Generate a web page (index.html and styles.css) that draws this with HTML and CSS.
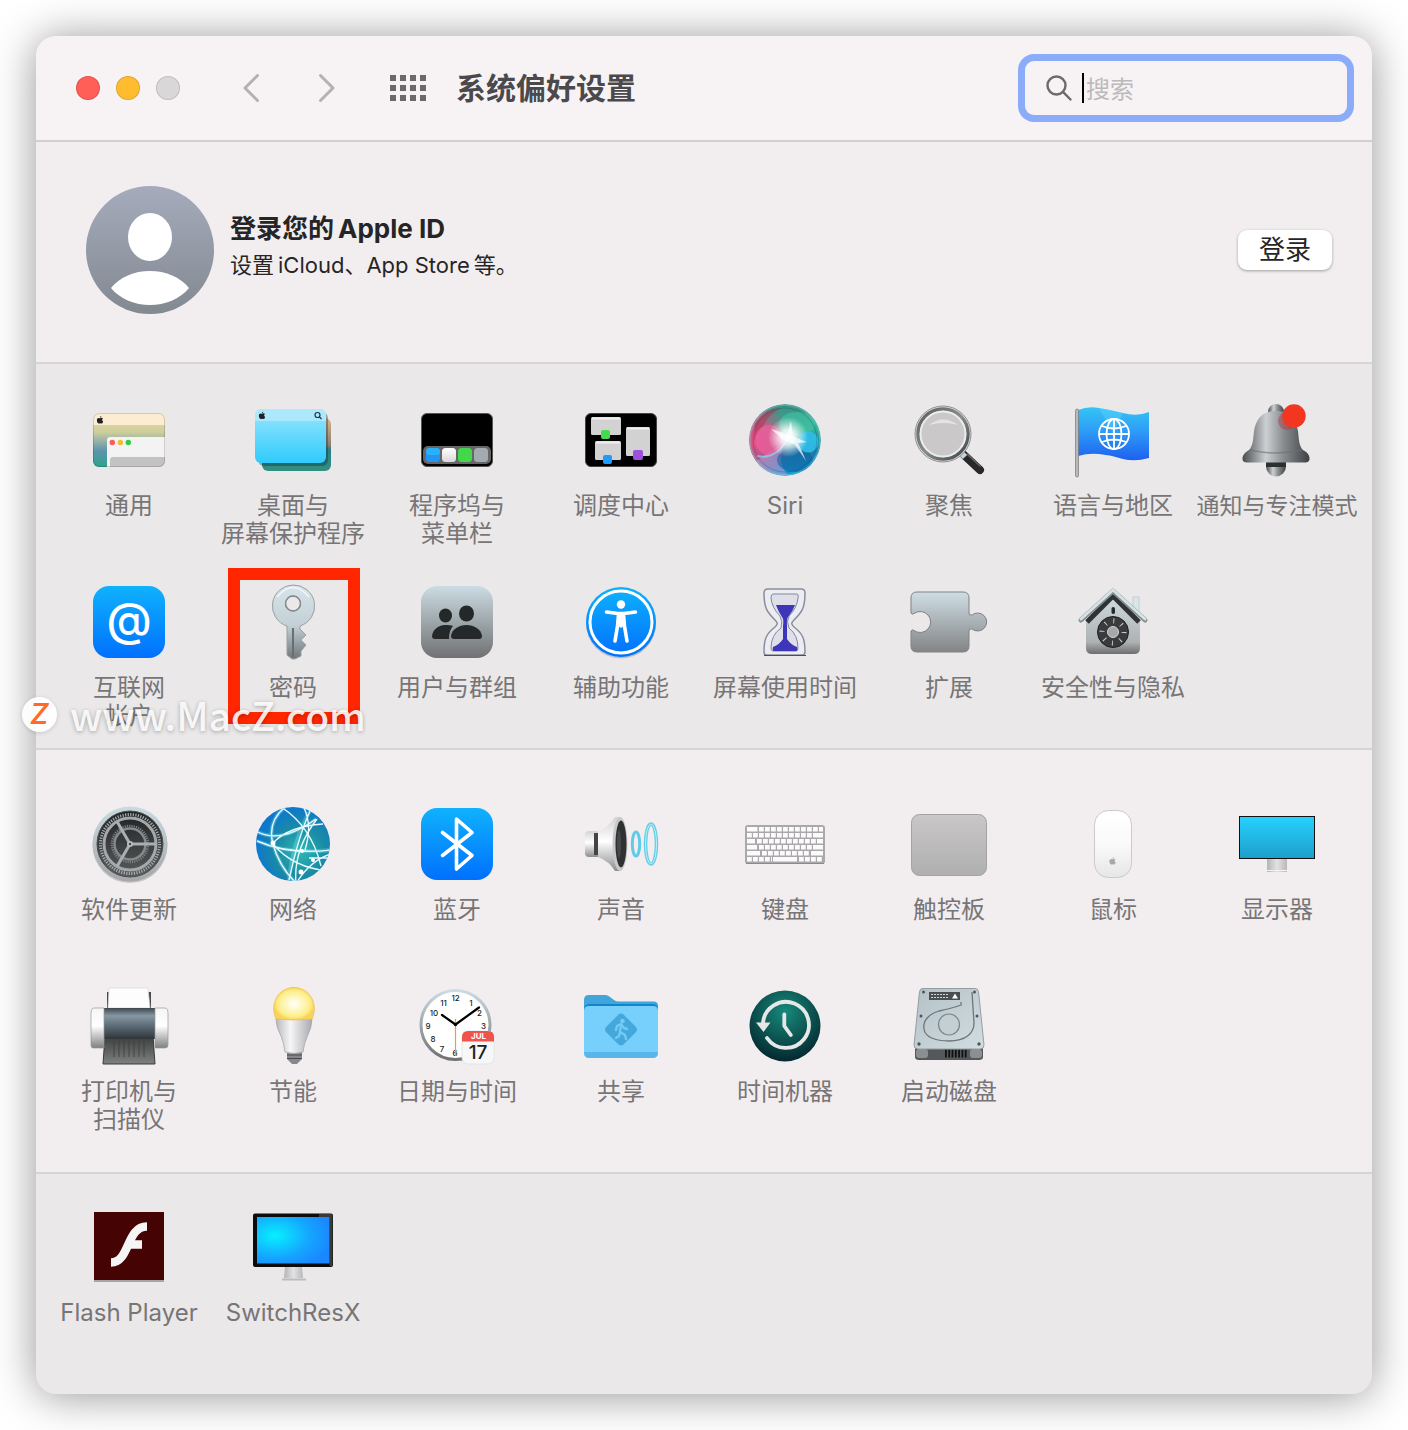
FILE: index.html
```html
<!DOCTYPE html>
<html lang="zh-CN">
<head>
<meta charset="utf-8">
<title>系统偏好设置</title>
<link rel="stylesheet" href="styles.css">
</head>
<body>
<svg class="defs" width="0" height="0" aria-hidden="true">
  <defs>
    <symbol id="apple" viewBox="0 0 16 18"><path d="M11 0c.2 1.500-1.400 3.700-3 3.700C7.800 2 9.400.3 11 0zM8 5c.8 0 2-1 3.700-.9 1 .1 2.300.5 3 1.700-2.700 1.700-2.200 5.300.6 6.400C14.600 14.200 13 17 11.300 17c-1.200 0-1.700-.7-3.100-.7-1.500 0-2 .7-3.100.7C3.200 17 .8 13 .8 9.600.8 6 3 4.200 5 4.200 6.300 4.200 7.200 5 8 5z"/></symbol>
    <linearGradient id="blue" x1="0" y1="0" x2="0" y2="1"><stop offset="0" stop-color="#0fb2fd"/><stop offset="1" stop-color="#0070fe"/></linearGradient>
    <linearGradient id="steel" x1="0" y1="0" x2="0" y2="1"><stop offset="0" stop-color="#cbdce3"/><stop offset="1" stop-color="#707172"/></linearGradient>
    <linearGradient id="puzzle" x1="0" y1="0" x2="0" y2="1"><stop offset="0" stop-color="#cfdee4"/><stop offset="1" stop-color="#838485"/></linearGradient>
    <linearGradient id="dune" x1="0" y1="0" x2="0" y2="1"><stop offset="0" stop-color="#e9dca8"/><stop offset=".35" stop-color="#cfce9c"/><stop offset=".7" stop-color="#5d94ae"/><stop offset="1" stop-color="#2da389"/></linearGradient>
    <linearGradient id="white" x1="0" y1="0" x2="0" y2="1"><stop offset="0" stop-color="#ffffff"/><stop offset="1" stop-color="#d8d8da"/></linearGradient>
    <linearGradient id="sky" x1="0" y1="0" x2="0" y2="1"><stop offset="0" stop-color="#9be6fd"/><stop offset="1" stop-color="#2ecbfd"/></linearGradient>
    <linearGradient id="back" x1="0" y1="0" x2="0" y2="1"><stop offset="0" stop-color="#d9b48c"/><stop offset=".5" stop-color="#8a8173"/><stop offset=".6" stop-color="#2b7f84"/><stop offset="1" stop-color="#329080"/></linearGradient>
    <linearGradient id="metalx"><stop offset="0" stop-color="#4a4d50"/><stop offset=".35" stop-color="#ccd0d2"/><stop offset=".6" stop-color="#8b8f92"/><stop offset="1" stop-color="#3f4144"/></linearGradient>
    <linearGradient id="lensrim" x1="0" y1="0" x2="1" y2="1"><stop offset="0" stop-color="#5a5c5d"/><stop offset=".5" stop-color="#8b8c8c"/><stop offset="1" stop-color="#3e4041"/></linearGradient>
    <linearGradient id="flag" x1="0" y1="0" x2="0" y2="1"><stop offset="0" stop-color="#33c5f3"/><stop offset=".45" stop-color="#2e9cf8"/><stop offset="1" stop-color="#1e5ff0"/></linearGradient>
    <linearGradient id="keyg" x1="0" y1="0" x2="0" y2="1"><stop offset="0" stop-color="#d7e4e9"/><stop offset=".55" stop-color="#c3d0d6"/><stop offset="1" stop-color="#6f7578"/></linearGradient>
    <linearGradient id="wall" x1="0" y1="0" x2="0" y2="1"><stop offset="0" stop-color="#cfdde1"/><stop offset=".8" stop-color="#aeb2b3"/><stop offset="1" stop-color="#6c6d6e"/></linearGradient>
    <linearGradient id="rim" x1="0" y1="0" x2="0" y2="1"><stop offset="0" stop-color="#c9dbe1"/><stop offset="1" stop-color="#a5a6a7"/></linearGradient>
    <linearGradient id="gearbg" x1="0" y1="0" x2="0" y2="1"><stop offset="0" stop-color="#1f2122"/><stop offset="1" stop-color="#5a5b5c"/></linearGradient>
    <radialGradient id="net" cx=".6" cy=".6" r=".65"><stop offset="0" stop-color="#2fb8b4"/><stop offset=".5" stop-color="#1b8ba5"/><stop offset="1" stop-color="#0b74d4"/></radialGradient>
    <linearGradient id="cone" x1="0" y1="0" x2="0" y2="1"><stop offset="0" stop-color="#d3d3d4"/><stop offset=".45" stop-color="#ffffff"/><stop offset="1" stop-color="#8c8d8e"/></linearGradient>
    <linearGradient id="pad" x1="0" y1="0" x2="0" y2="1"><stop offset="0" stop-color="#c9c7c8"/><stop offset="1" stop-color="#b0afb0"/></linearGradient>
    <linearGradient id="mouse" x1="0" y1="0" x2="0" y2="1"><stop offset="0" stop-color="#ffffff"/><stop offset=".5" stop-color="#fafafa"/><stop offset="1" stop-color="#e6e6e8"/></linearGradient>
    <linearGradient id="screen" x1="0" y1="0" x2="0" y2="1"><stop offset="0" stop-color="#26d1ff"/><stop offset="1" stop-color="#1d9fc9"/></linearGradient>
    <linearGradient id="roller" x1="0" y1="0" x2="0" y2="1"><stop offset="0" stop-color="#3f474d"/><stop offset=".25" stop-color="#8698a4"/><stop offset=".55" stop-color="#5f6f7a"/><stop offset="1" stop-color="#2f3538"/></linearGradient>
    <linearGradient id="cap" x1="0" y1="0" x2="0" y2="1"><stop offset="0" stop-color="#f5f5f5"/><stop offset=".45" stop-color="#ffffff"/><stop offset="1" stop-color="#7e7f80"/></linearGradient>
    <linearGradient id="tray" x1="0" y1="0" x2="0" y2="1"><stop offset="0" stop-color="#3c3d3d"/><stop offset="1" stop-color="#7f8080"/></linearGradient>
    <radialGradient id="glow"><stop offset="0" stop-color="#ffffff"/><stop offset=".3" stop-color="#fffad0"/><stop offset=".8" stop-color="#fdee8a"/><stop offset="1" stop-color="#f8d35c"/></radialGradient>
    <linearGradient id="bulb"><stop offset="0" stop-color="#b8b9bc"/><stop offset=".4" stop-color="#f6f6f8"/><stop offset="1" stop-color="#a9aaae"/></linearGradient>
    <radialGradient id="tm" cx=".5" cy=".3" r=".7"><stop offset="0" stop-color="#178a7c"/><stop offset="1" stop-color="#04282f"/></radialGradient>
    <linearGradient id="plate" x1="0" y1="0" x2="1" y2="1"><stop offset="0" stop-color="#b3c1c7"/><stop offset="1" stop-color="#d2dde1"/></linearGradient>
    <radialGradient id="srx" cx=".25" cy=".4" r=".8"><stop offset="0" stop-color="#07f0ff"/><stop offset=".6" stop-color="#15a5ff"/><stop offset="1" stop-color="#1a86ff"/></radialGradient>
    <linearGradient id="stand"><stop offset="0" stop-color="#b4b4b6"/><stop offset=".5" stop-color="#e2e2e4"/><stop offset="1" stop-color="#b8b8ba"/></linearGradient>
    <radialGradient id="star"><stop offset="0" stop-color="#fff"/><stop offset=".35" stop-color="#fff" stop-opacity=".85"/><stop offset="1" stop-color="#fff" stop-opacity="0"/></radialGradient>
    <linearGradient id="avatar" x1="0" y1="0" x2="0" y2="1"><stop offset="0" stop-color="#a5abbb"/><stop offset="1" stop-color="#828991"/></linearGradient>
    <radialGradient id="siriA" cx="0" cy=".5" r=".6"><stop offset="0" stop-color="#f04a84"/><stop offset=".5" stop-color="#d8507f" stop-opacity=".8"/><stop offset="1" stop-color="#c8416f" stop-opacity="0"/></radialGradient>
    <linearGradient id="siriB" x1="0" y1="0" x2="0" y2="1"><stop offset="0" stop-color="#3d8d80"/><stop offset=".35" stop-color="#2fb298"/><stop offset=".65" stop-color="#1f7fa8"/><stop offset="1" stop-color="#169bd8"/></linearGradient>
    <clipPath id="clipNet"><circle cx="40" cy="40" r="37"/></clipPath>
    <clipPath id="clipGeneral"><rect x="4" y="13" width="72" height="54" rx="6"/></clipPath>
    <clipPath id="clipDesk"><rect x="2" y="9" width="71" height="54" rx="6"/></clipPath>
    <clipPath id="clipSiri"><circle cx="40" cy="40" r="36"/></clipPath>
  </defs>
</svg>

<div class="desktop">
<main class="window">
  <header class="toolbar">
    <div class="lights">
      <button class="light light-close" type="button" aria-label="关闭"></button>
      <button class="light light-min" type="button" aria-label="最小化"></button>
      <button class="light light-zoom" type="button" aria-label="缩放" disabled></button>
    </div>
    <nav class="history">
      <button class="tool" type="button" aria-label="后退"><svg width="18" height="30" viewBox="0 0 18 30"><path d="M15.500 2.500 3 15l12.500 12.500" fill="none" stroke="#b4b1b3" stroke-width="3" stroke-linecap="round" stroke-linejoin="round"/></svg></button>
      <button class="tool" type="button" aria-label="前进"><svg width="18" height="30" viewBox="0 0 18 30"><path d="M2.500 2.500 15 15 2.500 27.500" fill="none" stroke="#b4b1b3" stroke-width="3" stroke-linecap="round" stroke-linejoin="round"/></svg></button>
    </nav>
    <button class="tool" type="button" aria-label="显示全部"><svg width="36" height="26" viewBox="0 0 36 26"><path d="M0 3h36M0 13h36M0 23h36" stroke="#6b696b" stroke-width="6" stroke-dasharray="6 4"/></svg></button>
    <h1 class="title">系统偏好设置</h1>
    <label class="search">
      <svg width="26" height="26" viewBox="0 0 26 26" fill="none" stroke="#6b696b" stroke-width="2.400" stroke-linecap="round" aria-hidden="true"><circle cx="10.500" cy="10.500" r="9"/><path d="m17.200 17.200 7.300 7.300"/></svg>
      <span class="caret"></span>
      <input class="search-input" type="text" placeholder="搜索" aria-label="搜索">
    </label>
  </header>

  <section class="account">
    <svg width="128" height="128" viewBox="0 0 128 128" aria-hidden="true"><circle cx="64" cy="64" r="64" fill="url(#avatar)"/><ellipse cx="64" cy="51" rx="22" ry="24" fill="#fff"/><path d="M25 102c9-11 23-17 39-17s30 6 39 17c-9 11-24 17-39 17s-30-6-39-17z" fill="#fff"/></svg>
    <div class="account-text">
      <h2 class="account-title">登录您的<span class="latin">Apple ID</span></h2>
      <p class="account-note">设置<span class="latin">iCloud</span>、<span class="mid">App Store</span>等。</p>
    </div>
    <button class="signin" type="button">登录</button>
  </section>

  <section class="panes panes-personal">
    <a class="pane" href="#general"><svg class="icon" viewBox="0 0 80 80"><g clip-path="url(#clipGeneral)"><rect x="4" y="13" width="72" height="54" fill="url(#dune)"/><rect x="4" y="13" width="72" height="12" fill="#fbecd2"/><path d="M18 67V40q0-3 3-3h57v30z" fill="#f3f3f3"/><path d="M21 67v-7q0-3 3-3h54v10z" fill="#c3c3c3"/></g><circle cx="23.300" cy="42.500" r="2.700" fill="#fc5b57"/><circle cx="31.300" cy="42.500" r="2.700" fill="#fdb827"/><circle cx="39.300" cy="42.500" r="2.700" fill="#31cd41"/><use href="#apple" x="7.500" y="16" width="7" height="8" fill="#222"/><rect x="4.500" y="13.500" width="71" height="53" rx="6" fill="none" stroke="#000" stroke-opacity=".15"/></svg><span class="name">通用</span></a>
    <a class="pane" href="#desktop"><svg class="icon" viewBox="0 0 80 80"><rect x="9" y="18" width="69" height="53" rx="6" fill="url(#back)"/><rect x="5" y="12" width="70" height="54" rx="6" fill="#123" opacity=".35"/><g clip-path="url(#clipDesk)"><rect x="2" y="9" width="71" height="54" fill="url(#sky)"/><rect x="2" y="9" width="71" height="12" fill="#b3eafb" opacity=".8"/></g><use href="#apple" x="5.500" y="11.500" width="7" height="8" fill="#222"/><g fill="none" stroke="#234" stroke-width="1.200"><circle cx="64.500" cy="15" r="2.500"/><path d="m66.500 17 2 2"/></g></svg><span class="name">桌面与<br>屏幕保护程序</span></a>
    <a class="pane" href="#dock"><svg class="icon" viewBox="0 0 80 80"><rect x="4.500" y="13.500" width="71" height="53" rx="5.500" stroke="#555" fill="#000"/><rect x="6" y="46" width="68" height="18" rx="5" fill="#666"/><rect x="9" y="48" width="14" height="14" rx="3.500" fill="#2494f5"/><rect x="9" y="48" width="14" height="7" rx="3.500" fill="#29b2fb"/><rect x="25" y="48" width="14" height="14" rx="3.500" fill="url(#white)"/><rect x="41" y="48" width="14" height="14" rx="3.500" fill="#43d74b"/><rect x="57" y="48" width="14" height="14" rx="3.500" fill="#a3abb0"/></svg><span class="name">程序坞与<br>菜单栏</span></a>
    <a class="pane" href="#mission"><svg class="icon" viewBox="0 0 80 80"><rect x="4.500" y="13.500" width="71" height="53" rx="5.500" stroke="#444" fill="#000"/><g fill="#d2d2d2"><rect x="10" y="17" width="30" height="18" rx="1.500"/><rect x="14" y="41" width="26" height="19" rx="1.500"/><rect x="45" y="27" width="24" height="29" rx="1.500"/></g><path d="M11 18.500h28M15 42.500h24M46 28.500h22" stroke="#efefef" stroke-width="2"/><rect x="20" y="30" width="9" height="9" rx="2" fill="#43dc4e"/><rect x="22" y="55" width="9" height="9" rx="2" fill="#1f9bfa"/><rect x="52" y="50" width="10" height="10" rx="2" fill="#9b51dc"/></svg><span class="name">调度中心</span></a>
    <a class="pane" href="#siri"><svg class="icon" viewBox="0 0 80 80"><g clip-path="url(#clipSiri)"><circle cx="40" cy="40" r="36" fill="url(#siriB)"/><circle cx="40" cy="40" r="36" fill="url(#siriA)"/><path d="M10 24Q20 8 36 8 24 14 18 26 12 32 9 42z" fill="#a8324f" opacity=".5"/><path d="M10 62Q24 52 40 42 30 62 44 76 22 76 10 62z" fill="#b39bd6" opacity=".6"/><ellipse cx="24" cy="40" rx="14" ry="15" fill="#ee5f9e" opacity=".75"/><ellipse cx="52" cy="24" rx="18" ry="12" fill="#49c9a8" opacity=".5"/><ellipse cx="50" cy="60" rx="18" ry="12" fill="#0f5c9e" opacity=".55"/><circle cx="63" cy="42" r="10.500" fill="#2fc0ef" opacity=".85"/><path d="M12 56q18 4 30-16" fill="none" stroke="#8fd6ee" stroke-width="2" opacity=".7"/><circle cx="43" cy="37" r="20" fill="url(#star)"/><path d="M26 29q14 4 16 6l4-14 2 15q10 5 14 6-7 1-9 1 4 8 8 18-8-12-12-17-10-3-12-5-5-5-11-10z" fill="#fff" opacity=".7"/></g><circle cx="40" cy="40" r="32" fill="none" stroke="#145" stroke-opacity=".25"/><circle cx="40" cy="40" r="35" fill="none" stroke="#7fd8dc" stroke-opacity=".4" stroke-width="1.500"/></svg><span class="name">Siri</span></a>
    <a class="pane" href="#spotlight"><svg class="icon" viewBox="0 0 80 80"><path d="m55 55 16 15" stroke="#262829" stroke-width="8" stroke-linecap="round"/><path d="m58 54 13 12" stroke="#666" stroke-width="1.500" stroke-linecap="round"/><path d="m51 52 5 5" stroke="#c6d3d8" stroke-width="6"/><circle cx="34" cy="34" r="28" fill="#dcdcdc" stroke="#8f9091" stroke-width="1"/><circle cx="34" cy="34" r="25" fill="#cac8c9" stroke="url(#lensrim)" stroke-width="3.500"/><circle cx="34" cy="34" r="22.500" fill="none" stroke="#e8eef0" stroke-width="2"/><path d="M20 25q14-11 29 0-14-4-29 0z" fill="#e4e4e4"/></svg><span class="name">聚焦</span></a>
    <a class="pane" href="#language"><svg class="icon" viewBox="0 0 80 80"><path d="M5 10q10-4 21-2 12 2 24 5 14 4 26-1v46q-14 4-26 1-12-4-24-5-11-1-21 2z" fill="url(#flag)"/><path d="M26 8q12 2 24 5l-10 20z" fill="#5fd8ff" opacity=".4"/><rect x="2.500" y="9" width="3" height="68" rx="1.500" fill="#b7b9ba" stroke="#77797b" stroke-width=".7"/><g fill="none" stroke="#fff" stroke-width="1.800"><circle cx="41" cy="34" r="15"/><ellipse cx="41" cy="34" rx="7.500" ry="15"/><path d="M26 34h30M41 19v30M29 26q12 5 24 0M29 42q12-5 24 0"/></g></svg><span class="name">语言与地区</span></a>
    <a class="pane" href="#notifications"><svg class="icon" viewBox="0 0 80 80"><circle cx="39" cy="66.500" r="10" fill="url(#metalx)"/><rect x="29" y="62" width="20" height="5" fill="#2c2e2f"/><circle cx="39" cy="12" r="8" fill="url(#metalx)"/><path d="M39 11c15 0 20 9 22 20 1 9 1 15 5 19 5 3 6.500 5 6.500 9 0 3-3 3.500-6 3.500h-55c-3 0-6-.5-6-3.500 0-4 2-6 6.500-9 4-4 4-10 5-19 2-11 7-20 22-20z" fill="url(#metalx)"/><path d="M13 50q26 6 52 0" fill="none" stroke="#6c6f72" stroke-width="1.500" opacity=".6"/><circle cx="50" cy="21" r="9" fill="#b4343a" opacity=".45"/><circle cx="57" cy="16" r="11.700" fill="#f2361f"/></svg><span class="name name-tight">通知与专注模式</span></a>
    <a class="pane" href="#internet"><svg class="icon" viewBox="0 0 80 80"><rect x="4" y="4" width="72" height="72" rx="16" fill="url(#blue)"/><text class="at" x="40" y="54" text-anchor="middle">@</text></svg><span class="name">互联网<br>帐户</span></a>
    <a class="pane pane-marked" href="#passwords"><svg class="icon" viewBox="0 0 80 80"><path fill-rule="evenodd" d="M40 3a21 21 0 0 1 7 41v3l6 6-5 5 5 5-5 6v5l-6 3h-3l-5-4V44A21 21 0 0 1 40 3zm0 11a7.500 7.500 0 1 0 0 15 7.500 7.500 0 0 0 0-15z" fill="url(#keyg)" stroke="#9aa0a3" stroke-width="1"/><circle cx="40" cy="21.500" r="7.500" fill="none" stroke="#85898b" stroke-width="1.500"/><path d="M40 46v29" stroke="#686e71" stroke-width="2"/><path d="M24 15Q40-4 56 15" fill="none" stroke="#fff" stroke-opacity=".7" stroke-width="1.500"/></svg><span class="name">密码</span></a>
    <a class="pane" href="#users"><svg class="icon" viewBox="0 0 80 80"><rect x="4" y="4" width="72" height="72" rx="16" fill="url(#steel)"/><g fill="#242828"><ellipse cx="28.500" cy="33.500" rx="6.500" ry="7"/><ellipse cx="49.500" cy="31.500" rx="7.500" ry="8"/><path d="M36 44q-4 4-4 13H18q-3 0-3-3c1-7 7-11 13-11 3 0 6 0 8 1z"/><path d="M37 57q-3 0-3-3c1-7 8-11 15.500-11S64 47 65 54q0 3-3 3z"/></g></svg><span class="name">用户与群组</span></a>
    <a class="pane" href="#accessibility"><svg class="icon" viewBox="0 0 80 80"><circle cx="40" cy="41.500" r="35" fill="#9aa3b0" opacity=".6"/><circle cx="40" cy="40" r="35" fill="url(#blue)"/><circle cx="40" cy="40" r="31" fill="none" stroke="#fff" stroke-width="3"/><circle cx="40" cy="22.500" r="4.200" fill="#fff"/><path d="M25.500 30 37 31.500h6L54.500 30M40 33v11M37.500 33l-1 11-2.500 15M42.500 33l1 11 2.500 15" fill="none" stroke="#fff" stroke-width="3.600" stroke-linecap="round" stroke-linejoin="round"/></svg><span class="name">辅助功能</span></a>
    <a class="pane" href="#screentime"><svg class="icon" viewBox="0 0 80 80"><path d="M23 7h33q4 0 4 4c0 15-3 19-11 27-3 3-3 4 0 7 9 7 11 12 11 25q0 3-3 3H22q-3 0-3-3c0-13 2-18 11-25 3-3 3-4 0-7-8-8-11-12-11-27q0-4 4-4z" fill="#ececf3" stroke="#8b8d9c" stroke-width="1.500"/><path d="M28 12h24q2 0 1 4-1 10-9 18-3 5 0 12 9 7 9 20 0 3-2 3H28q-2 0-2-3 0-13 10-20 2-7-1-12-8-8-9-18 0-4 2-4z" fill="#dfdfe9" stroke="#85879a" stroke-width="1"/><path d="M31 23h19q-2 6-7 12-1.500 2-1 9v13q4 6 10 8 1 4-1 4H29q-2 0-1-4 7-3 10-8V44q1-7-1-9-4-6-6-12z" fill="#3d36b8"/><path d="M19 73.500h42" stroke="#4a4d63" stroke-width="1.200"/></svg><span class="name">屏幕使用时间</span></a>
    <a class="pane" href="#extensions"><svg class="icon" viewBox="0 0 80 80"><path d="M8 10h46q6 0 6 6v15q0 3 3 2a9 9 0 1 1 0 14q-3-1-3 2v15q0 6-6 6H8q-6 0-6-6V49q1-2 3-.5a10.500 10.500 0 1 0 0-17q-2 1.500-3-.5V16q0-6 6-6z" fill="url(#puzzle)" stroke="#808386" stroke-width="1"/></svg><span class="name">扩展</span></a>
    <a class="pane" href="#security"><svg class="icon" viewBox="0 0 80 80"><rect x="60" y="15" width="6" height="20" fill="#d9e5e9" stroke="#b9c3c7" stroke-width=".7"/><path d="M40 12 67 38v28q0 6-6 6H19q-6 0-6-6V38z" fill="url(#wall)"/><path d="m14 40 26-26 26 26" fill="none" stroke="#2f3334" stroke-width="5"/><path d="m8 38 32-29 32 29" fill="none" stroke="#84908f" stroke-width="5" stroke-linecap="round" stroke-linejoin="round"/><path d="m8 37 32-29 32 29" fill="none" stroke="#d6e2e5" stroke-width="3" stroke-linecap="round" stroke-linejoin="round"/><rect x="38.500" y="25" width="3.500" height="7" rx="1.700" fill="#26292a"/><circle cx="40" cy="50" r="15.500" fill="#393b3d" stroke="#202122"/><circle cx="40" cy="50" r="11" fill="none" stroke="#c8cacb" stroke-width="5" stroke-dasharray="1 7.640"/><circle cx="40" cy="50" r="5.500" fill="#a5a8aa" stroke="#d0d2d3"/></svg><span class="name">安全性与隐私</span></a>
  </section>

  <section class="panes panes-hardware">
    <a class="pane" href="#update"><svg class="icon" viewBox="0 0 80 80"><circle cx="41" cy="41.500" r="37.500" fill="#777" opacity=".35"/><circle cx="41" cy="40" r="37.500" fill="url(#rim)"/><circle cx="41" cy="40" r="33" fill="url(#gearbg)" stroke="#4b4d4e"/><circle cx="41" cy="40" r="29.500" fill="none" stroke="#aab0b2" stroke-width="3" stroke-dasharray="1.200 1.374"/><circle cx="41" cy="40" r="26" fill="none" stroke="#a3a9ab" stroke-width="3"/><circle cx="41" cy="40" r="18" fill="none" stroke="#7d8182" stroke-width="2.500" stroke-dasharray="1.200 1.056"/><circle cx="41" cy="40" r="15.500" fill="none" stroke="#858a8c" stroke-width="2.500"/><path d="M41 40h26M41 40 28 17.500M41 40 28 62.500" stroke="#a9b0b3" stroke-width="3"/><circle cx="41" cy="40" r="3" fill="#b9bdbf"/><circle cx="41" cy="40" r="1.200" fill="#444"/></svg><span class="name">软件更新</span></a>
    <a class="pane" href="#network"><svg class="icon" viewBox="0 0 80 80"><circle cx="40" cy="40" r="37" fill="url(#net)"/><g clip-path="url(#clipNet)" fill="none"><g stroke="#7fe3f2" stroke-opacity=".35" stroke-width="4"><path d="M3 27q24 14 60-12M4 37q32 14 74 9M32 3Q14 18 20 40 26 62 42 78M58 5Q40 36 36 76"/></g><g stroke="#e6fbff" stroke-width="1.400"><path d="M3 27q24 14 60-12M4 37q32 14 74 9M32 3Q14 18 20 40 26 62 42 78M28 3Q58 22 68 62M58 5Q46 30 36 76M64 15Q40 46 43 80M50 2q10 18 2 44M20 39Q36 22 70 20M20 40q20 24 56 27M78 50Q58 56 44 78M56 54l24 0"/></g></g><g fill="#fff"><circle cx="20" cy="39" r="2.500"/><circle cx="49" cy="47" r="2"/><circle cx="48" cy="68" r="2.500"/><circle cx="60" cy="56" r="2"/></g></svg><span class="name">网络</span></a>
    <a class="pane" href="#bluetooth"><svg class="icon" viewBox="0 0 80 80"><rect x="4" y="4" width="72" height="72" rx="16" fill="url(#blue)"/><path d="m25.500 28.500 29.500 23-15.500 13.500V15L55 28.500l-29.500 23" fill="none" stroke="#fff" stroke-width="3.600" stroke-linecap="round" stroke-linejoin="round"/></svg><span class="name">蓝牙</span></a>
    <a class="pane" href="#sound"><svg class="icon" viewBox="0 0 80 80"><rect x="4" y="27" width="17" height="26" rx="4" fill="url(#cone)"/><path d="M13 29h8v22h-8z" fill="#444"/><path d="M17 27Q28 23 34 13h5v54h-5Q28 57 17 53z" fill="url(#cone)"/><ellipse cx="39" cy="40" rx="7.500" ry="27" fill="#c9c9ca"/><ellipse cx="40" cy="40" rx="5.500" ry="23.500" fill="#2f3132"/><ellipse cx="38" cy="40" rx="2" ry="14" fill="#474a4b"/><ellipse cx="55" cy="40" rx="3.700" ry="12" fill="none" stroke="#5fcbe4" stroke-width="3"/><ellipse cx="70" cy="40" rx="5.500" ry="20" fill="none" stroke="#63cde6" stroke-width="3.500"/><ellipse cx="70" cy="40" rx="5.500" ry="20" fill="none" stroke="#bdf0fa" stroke-width="1"/></svg><span class="name">声音</span></a>
    <a class="pane" href="#keyboard"><svg class="icon" viewBox="0 0 80 80"><rect x="0" y="21" width="80" height="39" rx="3" fill="#aaa8aa"/><path d="M1 59.500h78" stroke="#8b8a8b"/><g stroke="#fbfbfb" stroke-width="4.500"><path d="M2 25.200h10.500M2 37.200h8M72 37.200h6M2 43.200h10M68 43.200h10M2 49.200h13M66 49.200h12M28 55.200h24M68 31.200h10"/><path d="M14 25.200h64M2 31.200h65M12 37.200h59M14 43.200h53M17 49.200h48M2 55.200h25M54 55.200h24" stroke-dasharray="4.800 1.200"/></g></svg><span class="name">键盘</span></a>
    <a class="pane" href="#trackpad"><svg class="icon" viewBox="0 0 80 80"><rect x="2.500" y="10.500" width="75" height="61" rx="8" fill="url(#pad)" stroke="#a3a3a3"/></svg><span class="name">触控板</span></a>
    <a class="pane" href="#mouse"><svg class="icon" viewBox="0 0 80 80"><rect x="21.500" y="6.500" width="37" height="67" rx="14" fill="url(#mouse)" stroke="#cbc9ca"/><use href="#apple" x="36" y="53" width="7" height="8" fill="#a8a8aa"/></svg><span class="name">鼠标</span></a>
    <a class="pane" href="#displays"><svg class="icon" viewBox="0 0 80 80"><rect x="30" y="54" width="20" height="14" fill="url(#stand)"/><path d="M30 66.500h20" stroke="#f3f3f3"/><rect x="2.500" y="12.500" width="75" height="42" fill="url(#screen)" stroke="#111"/></svg><span class="name">显示器</span></a>
    <a class="pane" href="#printers"><svg class="icon" viewBox="0 0 80 80"><rect x="18" y="6" width="44" height="17" fill="#47494a"/><path d="M20 2h39l2 20H19z" fill="#fdfdfd" stroke="#d5d5d5" stroke-width=".7"/><path d="m16 50-2 28h52l-2-28z" fill="url(#tray)" stroke="#3a3b3b"/><path d="M25 55v16M30 55v16M35 55v16M40 55v16M45 55v16M50 55v16M55 55v16" stroke="#3a3b3b" stroke-width="1.200" opacity=".6"/><path d="M14 22h52v31H14z" fill="url(#roller)"/><path d="M5 22h10v40H4q-2 0-2-3V28q0-6 3-6zM66 22h10q3 0 3 6v31q0 3-3 3H66z" fill="url(#cap)" stroke="#96989a" stroke-width=".7"/></svg><span class="name">打印机与<br>扫描仪</span></a>
    <a class="pane" href="#energy"><svg class="icon" viewBox="0 0 80 80"><path d="M34 66h15v7l-5 5h-5l-5-5z" fill="#85898c"/><path d="M34 69h15M34 72.500h15" stroke="#4a4d50"/><path d="M23 33h36q0 8-5 18-3 7-4 15-9 3-18 0-1-9-4-16-5-9-5-17z" fill="url(#bulb)" stroke="#9ea0a3" stroke-width=".7"/><path d="M23 33c-7-16 3-31.500 18-31.500S66 17 59 33q-18 2-36 0z" fill="url(#glow)" stroke="#f2bd4e" stroke-width=".8"/></svg><span class="name">节能</span></a>
    <a class="pane" href="#datetime"><svg class="icon" viewBox="0 0 80 80"><circle cx="38.500" cy="39" r="34.500" fill="#fff" stroke="url(#steel)" stroke-width="3"/><g class="digits" text-anchor="middle"><text x="38.500" y="15">12</text><text x="54" y="19.500">1</text><text x="62.500" y="29.500">2</text><text x="66.500" y="42.500">3</text><text x="38" y="69.500">6</text><text x="25" y="65.500">7</text><text x="16" y="55.500">8</text><text x="11" y="42.500">9</text><text x="17" y="29.500">10</text><text x="26.500" y="19.500">11</text></g><path d="M38.500 38.500 25 29M38.500 38.500 62 21.500" stroke="#000" stroke-width="2.200" stroke-linecap="round"/><path d="M38.500 33v37" stroke="#e9a02e" stroke-width="1.200"/><circle cx="38.500" cy="38.500" r="1.700"/><rect x="45" y="45" width="32" height="33" rx="6" fill="#f7f7f7" stroke="#dcdcdc" stroke-width=".7"/><path d="M45 55.500V51q0-6 6-6h20q6 0 6 6v4.500z" fill="#f0524e"/><text class="month" x="61.500" y="53.200" text-anchor="middle">JUL</text><text class="day" x="61" y="73" text-anchor="middle">17</text></svg><span class="name">日期与时间</span></a>
    <a class="pane" href="#sharing"><svg class="icon" viewBox="0 0 80 80"><path d="M3 24V14q0-5 5-5h16q3 0 5 2l4 3q2 1.500 5 1.500h34q5 0 5 4V30H3z" fill="#41a4da"/><path d="M3 24q0-6 5-6h64q5 0 5 6v6H3z" fill="#1086c8"/><path d="M3 25q0-5 5-5h64q5 0 5 5v41.500q0 5-5 5H8q-5 0-5-5z" fill="#76d0fb"/><path d="M3 66q0 6 5 6h64q5 0 5-6z" fill="#57b7ea"/><path d="m37.500 28.500q2.500-2 5 0l12.500 12.500q2 2.500 0 5l-12.500 12.500q-2.500 2-5 0L25 46q-2-2.500 0-5z" fill="#45a8dc"/><g fill="none" stroke="#72cbf4" stroke-width="2.400" stroke-linecap="round" stroke-linejoin="round"><path d="m40 39-1 7 5 3 1 4M39 46l-1 4-3 2M35 44l1-4 4-2 3 4 3 1"/></g><circle cx="41.500" cy="35" r="2.300" fill="#72cbf4"/></svg><span class="name">共享</span></a>
    <a class="pane" href="#timemachine"><svg class="icon" viewBox="0 0 80 80"><circle cx="40" cy="40" r="35.500" fill="url(#tm)"/><g fill="none" stroke="#e6e8e8" stroke-width="3.800" stroke-linecap="round"><path d="M18 37a23 23 0 1 1 4 15"/><path d="M39.300 28.500V40l6.500 9" stroke-linejoin="round"/></g><path d="M11 36.500h14.500L18.500 46z" fill="#e6e8e8"/></svg><span class="name">时间机器</span></a>
    <a class="pane" href="#startup"><svg class="icon" viewBox="0 0 80 80"><path d="M6 60h68v11q0 3-4 3H10q-4 0-4-3z" fill="#55585a"/><path d="M36 67.500h22" stroke="#111" stroke-width="8" stroke-dasharray="1.800 1.500"/><rect x="7" y="63" width="12" height="9" rx="3" fill="#8b8f91"/><rect x="61" y="63" width="12" height="9" rx="3" fill="#8b8f91"/><path d="M14 2.500h52q3 0 3.500 3L75 59q0 4-4 4H9q-4 0-4-4l5.500-53.500q.5-3 3.500-3z" fill="url(#plate)" stroke="#949da1"/><path d="M52 16v3Q44 22 30 25C18 29 14 36 15 43c1 8 11 12 25 12 17 0 25-8 25-18L63 6" fill="none" stroke="#6d767a" stroke-width="1.300"/><circle cx="40" cy="38.500" r="10.500" fill="#c3cfd4" stroke="#7b868a" stroke-width="1.200"/><rect x="20" y="6" width="31" height="8" fill="#4a4e50"/><path d="M22 8.500h18M22 11.500h18" stroke="#cfd4d6" stroke-dasharray="2 1"/><path d="m46 7.500 3 5h-6z" fill="#fff"/><g fill="#4e5659"><circle cx="14.500" cy="6" r="1.500"/><circle cx="65.500" cy="6" r="1.500"/><circle cx="12" cy="30" r="1.500"/><circle cx="68" cy="30" r="1.500"/><circle cx="10" cy="58" r="1.700"/><circle cx="70" cy="58" r="1.700"/></g></svg><span class="name">启动磁盘</span></a>
  </section>

  <section class="panes panes-thirdparty">
    <a class="pane" href="#flash"><svg class="icon" viewBox="0 0 80 80"><rect x="5" y="6" width="70" height="69" fill="#555" opacity=".45"/><rect x="5" y="5" width="70" height="68" fill="#460303"/><path d="M22 55.500c19 0 15-36 36-36M42 37.500h11" fill="none" stroke="#f5f5f5" stroke-width="8.500"/></svg><span class="name">Flash Player</span></a>
    <a class="pane" href="#switchresx"><svg class="icon" viewBox="0 0 80 80"><path d="M32 60h17l1 11H31z" fill="url(#stand)"/><path d="M29 72.500h24" stroke="#bbbcbe" stroke-width="2"/><rect x="0" y="6.500" width="80" height="53.500" rx="2" fill="#0c0c0d"/><path d="M66 7h12q1.500 0 1.500 1.500V59h-3V10H66z" fill="#3a3a3c"/><rect x="4" y="10" width="72.500" height="46.500" fill="url(#srx)"/></svg><span class="name">SwitchResX</span></a>
  </section>
</main>

<div class="watermark">
  <span class="badge">Z</span>
  <span>www.MacZ.com</span>
</div>
</div>
</body>
</html>
```
FILE: styles.css
```css
*,
*::after {
  box-sizing: border-box;
}

body {
  margin: 0;
  background: #fff;
  color: #262526;
  font-family: Inter, "Noto Sans CJK SC", sans-serif;
}

button,
input {
  margin: 0;
  padding: 0;
  border: 0;
  background: none;
  font: inherit;
  color: inherit;
}

.defs {
  position: absolute;
}

.desktop {
  position: relative;
  padding: 36px;
}

.window {
  border-radius: 20px;
  background: #eae8e9;
  box-shadow: 0 2px 44px rgba(0, 0, 0, 0.42);
}

/* Toolbar */

.toolbar {
  display: flex;
  align-items: center;
  height: 106px;
  padding: 0 25px 0 40px;
  border-bottom: 2px solid #d2cfd1;
  border-radius: 20px 20px 0 0;
  background: #f7f3f5;
}

.lights {
  display: flex;
  gap: 16px;
}

.light {
  width: 24px;
  height: 24px;
  border: 1px solid rgba(0, 0, 0, 0.12);
  border-radius: 50%;
}

.light-close {
  background: #ff5f57;
}

.light-min {
  background: #febc2e;
}

.light-zoom {
  background: #dad7d9;
}

.history {
  display: flex;
  gap: 58px;
  margin: 0 54px 0 62px;
}

.tool {
  display: flex;
}

.title {
  margin: 0 0 0 30px;
  color: #4b494b;
  font-size: 30px;
  font-weight: 700;
  line-height: 36px;
}

.search {
  display: flex;
  align-items: center;
  width: 322px;
  height: 54px;
  margin-left: auto;
  padding-left: 21px;
  border-radius: 9px;
  box-shadow: 0 0 0 7px #8badf9;
}

.caret {
  width: 2px;
  height: 30px;
  margin: 0 2px 0 10px;
  background: #000;
}

.search-input {
  flex: 1;
  min-width: 0;
  padding-top: 4px;
  font-size: 24px;
  line-height: 30px;
  outline: none;
  caret-color: transparent;
}

.search-input::placeholder {
  color: #bcb9bb;
  opacity: 1;
}

/* Account */

.account {
  display: flex;
  align-items: center;
  height: 222px;
  padding: 0 40px 4px 50px;
  border-bottom: 2px solid #d8d5d7;
  background: #f2eef0;
}

.account-text {
  margin-left: 16px;
  padding-bottom: 6px;
}

.account-title {
  margin: 0;
  font-size: 26px;
  font-weight: 700;
  line-height: 36px;
}

.account-note {
  margin: 0;
  font-size: 22px;
  line-height: 36px;
}

.latin {
  margin-left: 4px;
}

.mid {
  margin-right: 4px;
}

.signin {
  width: 94px;
  height: 40px;
  margin-left: auto;
  border-radius: 9px;
  background: #fff;
  box-shadow: 0 1px 3px rgba(0, 0, 0, 0.35);
  font-size: 26px;
  line-height: 40px;
}

/* Preference panes */

.panes {
  display: grid;
  grid-template-columns: repeat(8, 1fr);
  row-gap: 34px;
}

.panes-personal {
  padding: 36px 13px 18px 11px;
  border-bottom: 2px solid #d6d4d5;
}

.panes-hardware {
  padding: 54px 13px 38px 11px;
  border-bottom: 2px solid #d6d4d5;
  background: #f2eef0;
}

.panes-thirdparty {
  padding: 33px 13px 39px 11px;
}

.pane {
  position: relative;
  display: flex;
  flex-direction: column;
  align-items: center;
  gap: 12px;
  color: #777576;
  font-size: 24px;
  line-height: 28px;
  text-align: center;
  text-decoration: none;
  white-space: nowrap;
}

.icon {
  width: 80px;
  height: 80px;
}

.name {
  min-height: 56px;
}

.name-tight {
  font-size: 23px;
}

.pane-marked::after {
  content: "";
  position: absolute;
  top: -14px;
  left: 17px;
  width: 132px;
  height: 156px;
  border: 12px solid #ff2600;
}

.at {
  fill: #fff;
  font: 500 46px Inter, sans-serif;
}

.digits {
  fill: #222;
  font: 500 8px Inter, sans-serif;
}

.month {
  fill: #fff;
  font: 700 8px Inter, sans-serif;
}

.day {
  fill: #222;
  font: 500 19px Inter, sans-serif;
}

/* Watermark */

.watermark {
  position: absolute;
  top: 690px;
  left: 22px;
  display: flex;
  align-items: center;
  gap: 13px;
  color: rgba(255, 255, 255, 0.88);
  font-family: "Noto Sans CJK SC", sans-serif;
  font-size: 39px;
  font-weight: 500;
  line-height: 48px;
  text-shadow: 0 1px 4px rgba(0, 0, 0, 0.3);
  pointer-events: none;
}

.badge {
  width: 35px;
  height: 35px;
  border-radius: 50%;
  background: rgba(255, 255, 255, 0.92);
  box-shadow: 0 1px 4px rgba(0, 0, 0, 0.15);
  color: #ff6a26;
  font-family: Inter, sans-serif;
  font-size: 28px;
  font-style: italic;
  font-weight: 600;
  line-height: 35px;
  text-align: center;
  text-shadow: none;
}
```
